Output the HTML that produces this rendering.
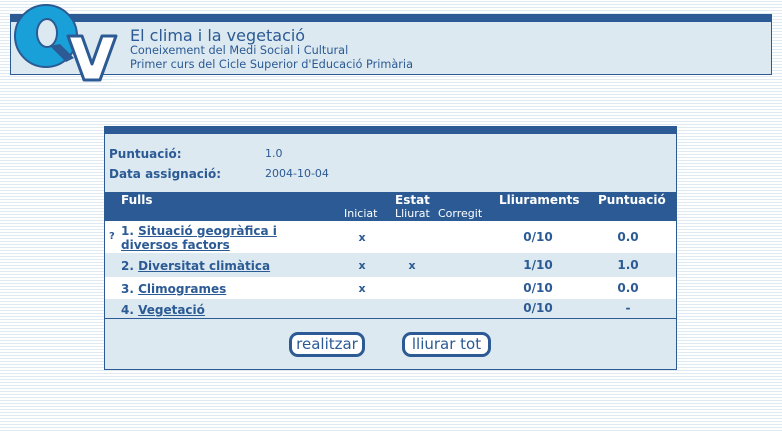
<!DOCTYPE html>
<html><head><meta charset="utf-8"><style>
body{margin:0;width:782px;height:432px;position:relative;overflow:hidden;font-family:Verdana,"DejaVu Sans",sans-serif;
background:repeating-linear-gradient(#fff 0 1px,#dfeaf2 1px 2px,#fff 2px 3px);color:#2b5a94}
.a{position:absolute}
.hdr{left:10px;top:14px;width:760px;height:52px;background:#dde9f0;border:1px solid #2b5a94;border-top:8px solid #2b5a94}
.t1{left:130px;top:26px;font-size:16px}
.t2{left:130px;top:44px;font-size:11.3px}
.t3{left:130px;top:58px;font-size:11.3px}
.panel{left:104px;top:126px;width:571px;height:235px;background:#dde9f0;border:1px solid #2b5a94;border-top:8px solid #2b5a94}
.b{font-weight:bold;font-size:12px}
.s{font-size:11px}
.c{text-align:center}
.btn{border:3px solid #2b5a94;border-radius:9px;background:#fff;font-size:15px;text-align:center;line-height:18px;box-sizing:border-box}
u{text-decoration:underline}
</style></head><body>
<div class="a hdr"></div>
<svg class="a" style="left:10px;top:0" width="110" height="86">
<circle cx="36" cy="36" r="31" fill="#1aa0d8" stroke="#2b5a94" stroke-width="2"/>
<ellipse cx="37" cy="33" rx="10" ry="14" fill="#dde9f0" stroke="#2b5a94" stroke-width="2"/>
<path d="M40 46 L56 62 L64 58 L50 44 Z" fill="#2b5a94"/>
<path d="M58 36 L72 36 L82 64 L92 36 L106 36 L90 80 L74 80 Z" fill="#fff" stroke="#2b5a94" stroke-width="3" stroke-linejoin="round"/>
</svg>
<div class="a t1">El clima i la vegetació</div>
<div class="a t2">Coneixement del Medi Social i Cultural</div>
<div class="a t3">Primer curs del Cicle Superior d'Educació Primària</div>

<div class="a panel"></div>
<div class="a b" style="left:109px;top:147px">Puntuació:</div>
<div class="a s" style="left:265px;top:147px">1.0</div>
<div class="a b" style="left:109px;top:167px">Data assignació:</div>
<div class="a s" style="left:265px;top:167px">2004-10-04</div>

<div class="a" style="left:105px;top:192px;width:571px;height:29px;background:#2b5a94"></div>
<div class="a" style="left:105px;top:221px;width:571px;height:32px;background:#fff"></div>
<div class="a" style="left:105px;top:277px;width:571px;height:22px;background:#fff"></div>
<div class="a" style="left:105px;top:318px;width:571px;height:1px;background:#2b5a94"></div>

<div class="a b" style="left:121px;top:193px;color:#fff">Fulls</div>
<div class="a b" style="left:395px;top:193px;color:#fff">Estat</div>
<div class="a b" style="left:499px;top:193px;color:#fff">Lliuraments</div>
<div class="a b" style="left:598px;top:193px;color:#fff">Puntuació</div>
<div class="a s" style="left:344px;top:207px;color:#fff">Iniciat</div>
<div class="a s" style="left:395px;top:207px;color:#fff">Lliurat</div>
<div class="a s" style="left:438px;top:207px;color:#fff">Corregit</div>

<div class="a b" style="left:109px;top:231px;font-size:10px">?</div>
<div class="a b" style="left:121px;top:224px;line-height:14px">1. <u>Situació geogràfica i</u><br><u>diversos factors</u></div>
<div class="a b" style="left:121px;top:259px">2. <u>Diversitat climàtica</u></div>
<div class="a b" style="left:121px;top:282px">3. <u>Climogrames</u></div>
<div class="a b" style="left:121px;top:303px">4. <u>Vegetació</u></div>

<div class="a b c" style="left:352px;top:231px;width:20px;font-size:11px">x</div>
<div class="a b c" style="left:352px;top:259px;width:20px;font-size:11px">x</div>
<div class="a b c" style="left:402px;top:259px;width:20px;font-size:11px">x</div>
<div class="a b c" style="left:352px;top:282px;width:20px;font-size:11px">x</div>

<div class="a b c" style="left:508px;top:230px;width:60px">0/10</div>
<div class="a b c" style="left:508px;top:258px;width:60px">1/10</div>
<div class="a b c" style="left:508px;top:281px;width:60px">0/10</div>
<div class="a b c" style="left:508px;top:301px;width:60px">0/10</div>
<div class="a b c" style="left:598px;top:230px;width:60px">0.0</div>
<div class="a b c" style="left:598px;top:258px;width:60px">1.0</div>
<div class="a b c" style="left:598px;top:281px;width:60px">0.0</div>
<div class="a b c" style="left:598px;top:301px;width:60px">-</div>

<div class="a btn" style="left:289px;top:332px;width:76px;height:25px">realitzar</div>
<div class="a btn" style="left:402px;top:332px;width:89px;height:25px">lliurar tot</div>
</body></html>
